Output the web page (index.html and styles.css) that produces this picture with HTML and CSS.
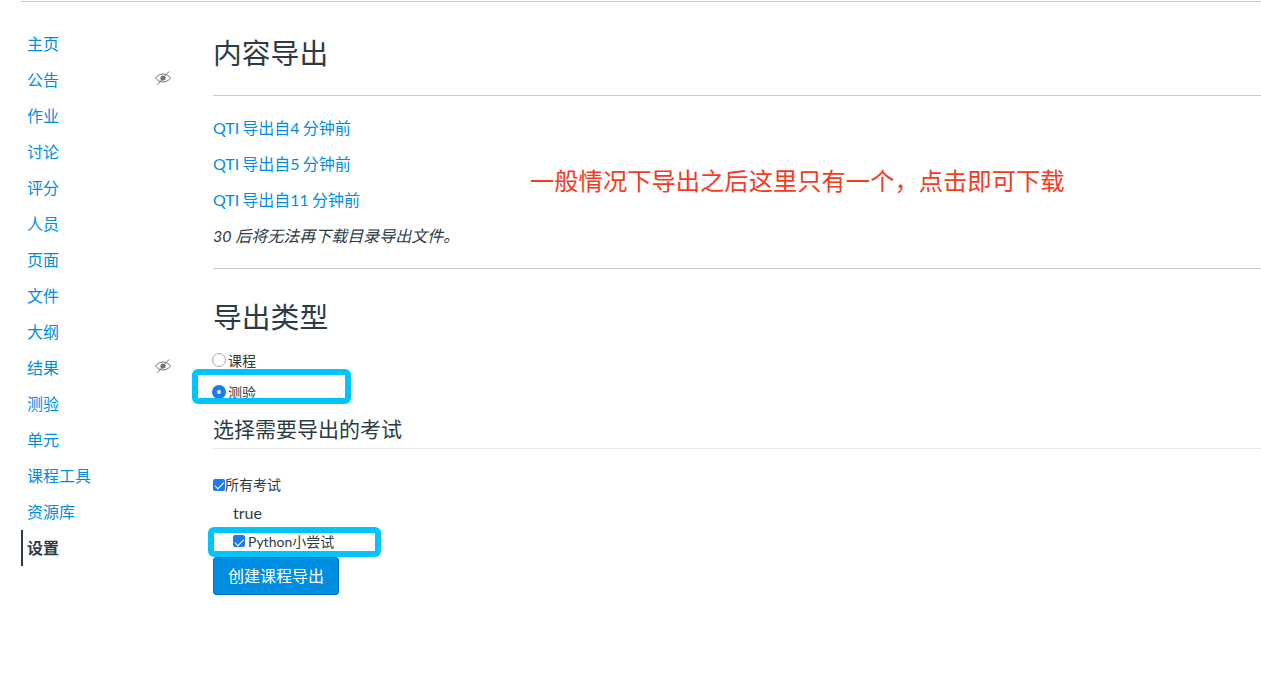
FILE: index.html
```
<!DOCTYPE html>
<html lang="zh">
<head>
<meta charset="utf-8">
<title>内容导出</title>
<link rel="stylesheet" href="styles.css">
</head>
<body>
<div class="page">
  <nav class="nav">
    <a class="nav-item" href="#">主页</a>
    <a class="nav-item" href="#">公告<svg class="eye" viewBox="0 0 16 16"><path d="M.5 8C2.500 5.300 5 4 8 4s5.500 1.300 7.500 4c-2 2.700-4.500 4-7.500 4S2.500 10.700.5 8z" fill="none" stroke="#5b6770" stroke-width=".9"/><circle cx="8" cy="8" r="2.600" fill="#6d7882"/><path d="M2.500 14.500L14 1.500" stroke="#5b6770" stroke-width=".9"/></svg></a>
    <a class="nav-item" href="#">作业</a>
    <a class="nav-item" href="#">讨论</a>
    <a class="nav-item" href="#">评分</a>
    <a class="nav-item" href="#">人员</a>
    <a class="nav-item" href="#">页面</a>
    <a class="nav-item" href="#">文件</a>
    <a class="nav-item" href="#">大纲</a>
    <a class="nav-item" href="#">结果<svg class="eye" viewBox="0 0 16 16"><path d="M.5 8C2.500 5.300 5 4 8 4s5.500 1.300 7.500 4c-2 2.700-4.500 4-7.500 4S2.500 10.700.5 8z" fill="none" stroke="#5b6770" stroke-width=".9"/><circle cx="8" cy="8" r="2.600" fill="#6d7882"/><path d="M2.500 14.500L14 1.500" stroke="#5b6770" stroke-width=".9"/></svg></a>
    <a class="nav-item" href="#">测验</a>
    <a class="nav-item" href="#">单元</a>
    <a class="nav-item" href="#">课程工具</a>
    <a class="nav-item" href="#">资源库</a>
    <a class="nav-item active" href="#">设置</a>
  </nav>
  <main class="main">
    <h1 class="title">内容导出</h1>
    <hr class="rule rule-first">
    <ul class="exports">
      <li><a href="#">QTI 导出自4 分钟前</a></li>
      <li><a href="#">QTI 导出自5 分钟前</a></li>
      <li><a href="#">QTI 导出自11 分钟前</a></li>
      <li class="note">30 后将无法再下载目录导出文件。</li>
    </ul>
    <hr class="rule rule-second">
    <h1 class="title title-type">导出类型</h1>
    <label class="radio-row"><input class="radio" type="radio" name="type">课程</label>
    <label class="radio-row"><input class="radio" type="radio" name="type" checked>测验</label>
    <h2 class="subtitle">选择需要导出的考试</h2>
    <label class="all-row"><input class="check" type="checkbox" checked>所有考试</label>
    <div class="true-row">true</div>
    <label class="quiz-row"><input class="check" type="checkbox" checked>Python小尝试</label>
    <button class="submit" type="button">创建课程导出</button>
  </main>
</div>
<div class="mark mark-radio"></div>
<div class="mark mark-quiz"></div>
<div class="annotation">一般情况下导出之后这里只有一个，点击即可下载</div>
</body>
</html>
```

FILE: styles.css
```
* { box-sizing: border-box; }
html, body { margin: 0; padding: 0; }
body {
  position: relative;
  height: 691px;
  overflow: hidden;
  background: #fff;
  color: #2d3b45;
  font-family: Lato, "Noto Sans CJK SC", sans-serif;
  font-size: 16px;
}
a { color: #008ee2; text-decoration: none; }
.page {
  display: flex;
  margin: 1px 0 0 21px;
  border-top: 1px solid #c7cdd1;
}
.nav {
  width: 192px;
  flex: none;
  padding-top: 24px;
  display: flex;
  flex-direction: column;
}
.nav-item {
  height: 36px;
  width: 150px;
  padding-left: 6px;
  display: flex;
  align-items: center;
  justify-content: space-between;
  line-height: 36px;
}
.nav-item.active {
  color: #2d3b45;
  font-weight: 700;
  border-left: 2px solid #2d3b45;
  padding-left: 4px;
}
.eye { width: 16px; height: 16px; margin-top: -4px; }
.main { flex: 1; min-width: 0; }
.title {
  margin: 0;
  font-size: 28.800px;
  font-weight: 400;
  line-height: 36px;
  padding-top: 33px;
}
.rule { border: 0; border-top: 1px solid #c7cdd1; margin: 0; }
.rule-first { margin-top: 24px; }
.exports { list-style: none; margin: 0; padding: 14px 0 0; word-spacing: -1px; }
.exports li { height: 36px; line-height: 36px; }
.note { font-style: italic; word-spacing: 0; }
.rule-second { margin-top: 14px; }
.title-type { padding-top: 30px; }
.radio-row {
  display: flex;
  align-items: center;
  height: 32px;
  margin-left: -1px;
  font-size: 14px;
}
.radio-row:first-of-type { margin-top: 9px; }
.radio {
  appearance: none;
  margin: 0 2px 0 0;
  width: 14px;
  height: 14px;
  border: 1px solid #a8a8a8;
  border-radius: 50%;
  background: #fff;
}
.radio:checked {
  border: 5px solid #1a7cf0;
}
.check {
  appearance: none;
  position: relative;
  width: 12px;
  height: 12px;
  border-radius: 2px;
  background: #1a7cf0;
}
.check::after {
  content: "";
  position: absolute;
  left: 4px;
  top: 1.500px;
  width: 4px;
  height: 7.500px;
  border: solid #fff;
  border-width: 0 1.800px 1.800px 0;
  transform: rotate(45deg);
}
.subtitle {
  margin: 0;
  padding-top: 7px;
  height: 41px;
  font-size: 21px;
  font-weight: 400;
  line-height: 28px;
  border-bottom: 1px solid #e6e8ea;
}
.all-row {
  display: flex;
  align-items: center;
  height: 20px;
  margin-top: 25px;
  font-size: 14px;
}
.all-row .check { margin: 1px 0 0; }
.true-row { margin-top: 9px; padding-left: 20px; line-height: 20px; }
.quiz-row {
  display: flex;
  align-items: center;
  height: 20px;
  margin-top: 8px;
  padding-left: 20px;
  font-size: 14px;
}
.quiz-row .check { margin: 0 3px 0 0; }
.submit {
  display: block;
  margin-top: 6px;
  width: 126px;
  height: 38px;
  background: #008ee2;
  color: #fff;
  border: 1px solid #0079c1;
  border-radius: 3px;
  font: inherit;
  padding: 0 0 2px;
}
.mark {
  position: absolute;
  border: 6px solid #00c4ff;
  border-radius: 6px;
}
.mark-radio { left: 192px; top: 369px; width: 159px; height: 35px; }
.mark-quiz { left: 208px; top: 527px; width: 173px; height: 30px; }
.annotation {
  position: absolute;
  left: 530px;
  top: 163px;
  font-size: 24.300px;
  line-height: 36px;
  color: #f53b1e;
  white-space: nowrap;
}
```
